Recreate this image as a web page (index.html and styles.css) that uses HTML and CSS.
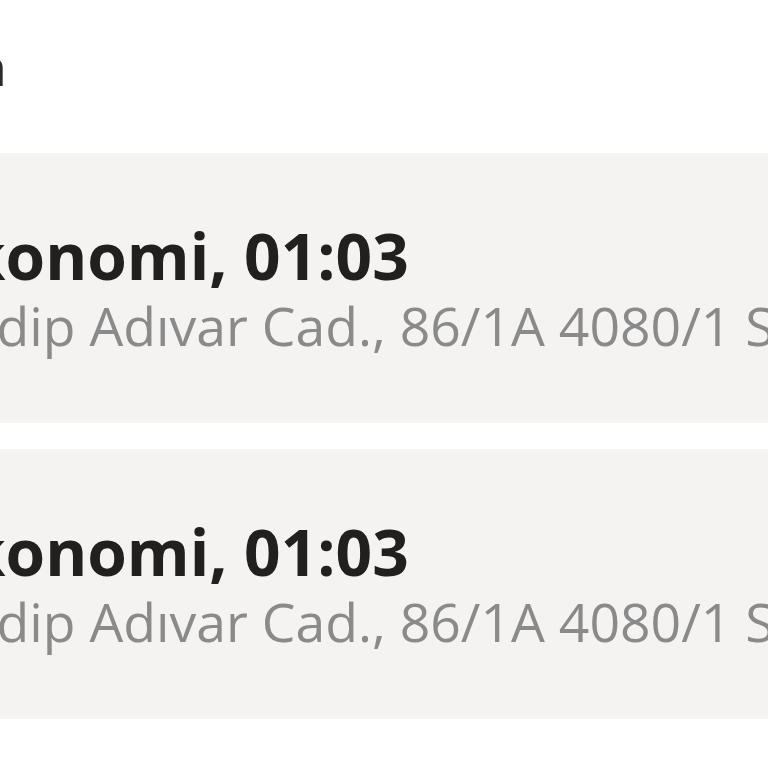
FILE: index.html
```html
<!DOCTYPE html>
<html lang="tr">
<head>
<meta charset="utf-8">
<title>Yolculuklar</title>
<link rel="stylesheet" href="styles.css">
</head>
<body>
<div class="page">
  <div class="header">
    <div class="heading"><span>Geçmiş yolculukların</span></div>
  </div>
  <div class="list">
    <div class="card">
      <div class="card-body">
        <div class="title">Ekonomi, 01:03</div>
        <div class="address">Halide Edip Adıvar Cad., 86/1A 4080/1 Sokak</div>
      </div>
    </div>
    <div class="card">
      <div class="card-body">
        <div class="title">Ekonomi, 01:03</div>
        <div class="address">Halide Edip Adıvar Cad., 86/1A 4080/1 Sokak</div>
      </div>
    </div>
  </div>
</div>
</body>
</html>
```

FILE: styles.css
```css
html, body {
  margin: 0;
  padding: 0;
  background: #ffffff;
}
body {
  width: 768px;
  height: 768px;
  overflow: hidden;
  font-family: "Open Sans", "Noto Sans", sans-serif;
}
.page {
  display: flex;
  flex-direction: column;
}
.header {
  height: 153px;
}
.heading {
  width: 7px;
  display: flex;
  justify-content: flex-end;
  white-space: nowrap;
  padding-top: 36px;
  font-size: 52px;
  line-height: 60px;
  color: #2b2b2b;
}
.list {
  display: flex;
  flex-direction: column;
  gap: 26px;
}
.card {
  background: #f4f3f1;
  height: 270px;
  overflow: hidden;
  box-sizing: border-box;
  padding-top: 67px;
}
.card-body {
  margin-left: -70px;
  white-space: nowrap;
}
.title {
  font-size: 64px;
  line-height: 72px;
  font-weight: 700;
  color: #21201f;
}
.address {
  margin-left: -136px;
  font-size: 53.5px;
  line-height: 68px;
  color: #8a8a8a;
}
```
